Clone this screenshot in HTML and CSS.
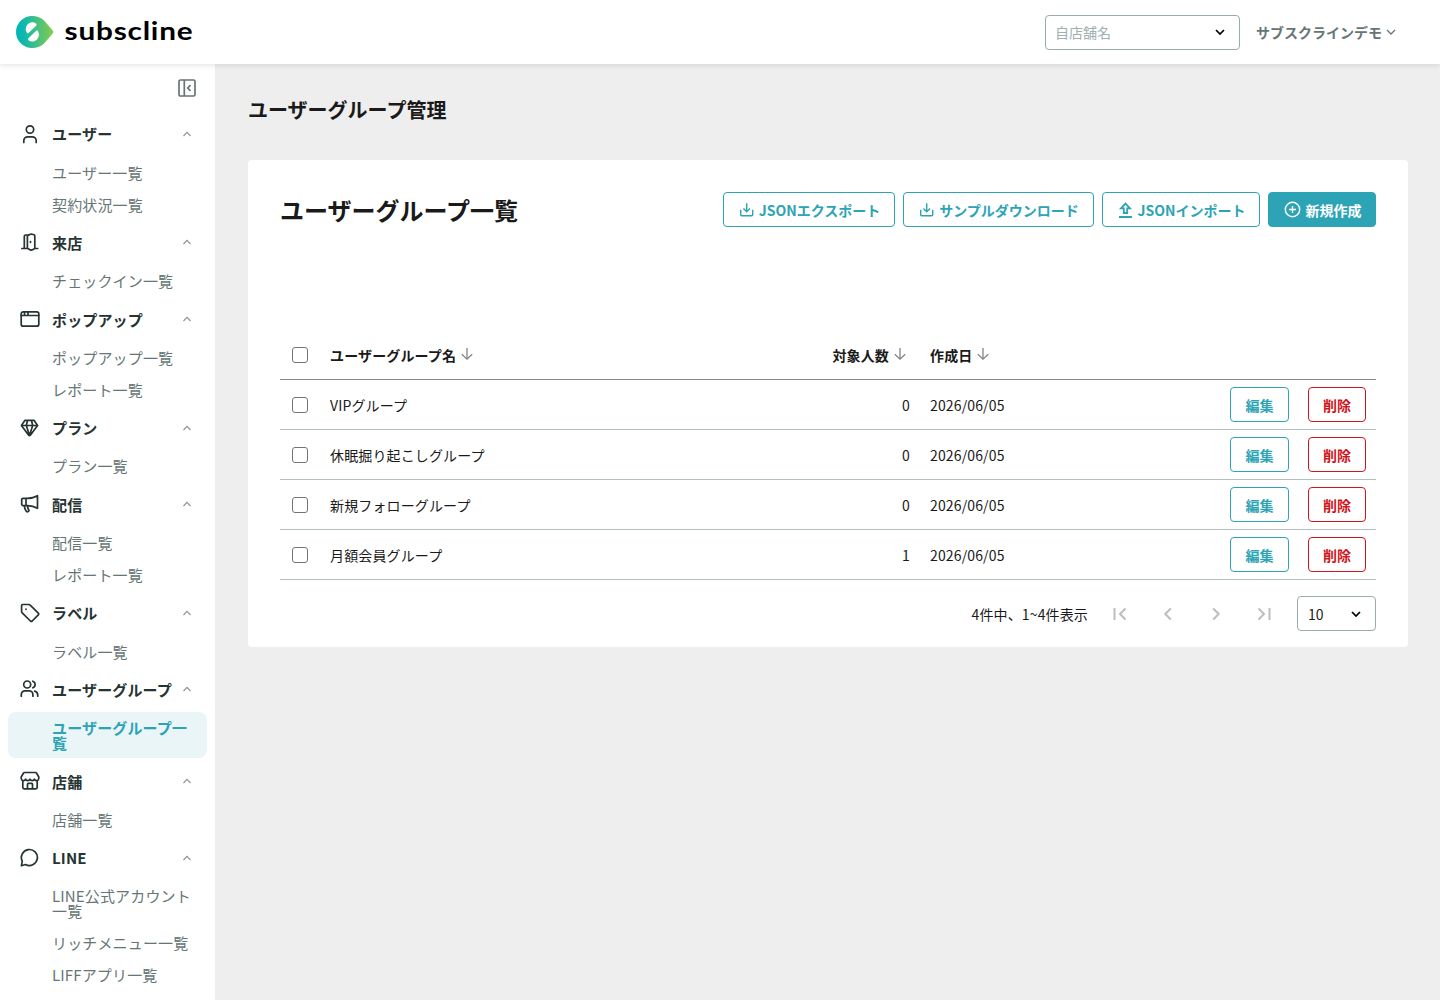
FILE: index.html
```html
<!DOCTYPE html>
<html lang="ja">
  <head>
    <meta charset="UTF-8" />
    <meta name="viewport" content="width=device-width, initial-scale=1.0" />
    <title>ユーザーグループ管理 | subscline</title>
    <link rel="stylesheet" href="styles.css">
  </head>
  <body>
    <!-- Shared icons -->
    <svg class="icon-defs" width="0" height="0">
      <symbol id="chevron-up" viewBox="0 0 10 10">
        <path d="M1.500 7 5 3.300 8.500 7" />
      </symbol>
      <symbol id="chevron-down" viewBox="0 0 12 12">
        <path d="M2 4l4 4 4-4" />
      </symbol>
      <symbol id="arrow-down" viewBox="0 0 14 14">
        <path d="M7 1v11M1.800 7.200 7 12.200l5.200-5" />
      </symbol>
      <symbol id="download" viewBox="0 0 18 18">
        <path d="M2.700 8.700v5.100q0 .9.900.9h10.200q.9 0 .9-.9V8.700M8.700 2.200v8.300M5.400 7.500 8.700 10.800 12 7.500" />
      </symbol>
    </svg>

    <header class="header">
      <a class="logo" href="#">
        <svg width="180" height="40" viewBox="0 0 180 40">
          <defs>
            <linearGradient id="logoGradient" x1="0" y1="0" x2="1" y2="0">
              <stop offset="0" stop-color="#00b5b8" />
              <stop offset="0.2" stop-color="#0eb8ae" />
              <stop offset="1" stop-color="#86cb4b" />
            </linearGradient>
          </defs>
          <path fill="url(#logoGradient)" d="M16 4c5 0 9.300 1.800 12.500 5l8.200 9.600q1.200 1.400 0 2.800L28.500 31c-3.200 3.200-7.500 5-12.500 5a16 16 0 0 1 0-32z" />
          <path fill="#fff" d="M20 11.600q1.200 1 .2 2.100L12.500 21q-1 .8-1.700-.2c-1.700-2.500-1.300-5.800.7-8.200 2.300-2.600 5.800-3.200 8.500-1zM12.500 28.300q-1.100-1-.1-2.100l7.800-7.500q1-.8 1.700.3c1.500 2.400 1.500 5.300-.3 7.700-2.200 3-6.200 3.700-9.100 1.600z" />
          <text class="logo-text" x="48.500" y="27.800" textLength="129" lengthAdjust="spacingAndGlyphs">subscline</text>
        </svg>
      </a>
      <div class="header-right">
        <div class="select shop-select">
          <span class="placeholder">自店舗名</span>
          <svg class="select-arrow"><use href="#chevron-down" /></svg>
        </div>
        <div class="account">
          サブスクラインデモ
          <svg class="account-arrow"><use href="#chevron-down" /></svg>
        </div>
      </div>
    </header>

    <div class="layout">
      <nav class="sidebar">
        <div class="sidebar-toggle">
          <svg width="20" height="20" viewBox="0 0 20 20">
            <rect x="2" y="2" width="16" height="16" rx="1.500" />
            <path d="M7.300 2v16M13.500 7.200 10.800 10l2.700 2.800" />
          </svg>
        </div>

        <div class="nav-group">
          <div class="nav-title">
            <svg class="nav-icon" viewBox="0 0 20 20"><circle cx="10" cy="5.500" r="3.700" /><path d="M3.800 18.500v-1.700a4 4 0 0 1 4-4h4.400a4 4 0 0 1 4 4v1.700" /></svg>
            <span>ユーザー</span>
            <svg class="nav-arrow"><use href="#chevron-up" /></svg>
          </div>
          <a class="nav-item" href="#">ユーザー一覧</a>
          <a class="nav-item" href="#">契約状況一覧</a>
        </div>

        <div class="nav-group">
          <div class="nav-title">
            <svg class="nav-icon" viewBox="0 0 20 20"><path d="M1.800 16.500h2.500V4.300q0-1.300 1.300-1.300h1.800M7.400 16.200V4.300q0-.9.900-1.200l2.200-.9q.8-.2 1.600 0l2 .5q.7.300.7 1.200v12.600M7.400 16.300l3 1.600q.8.300 1.600 0l2.800-1.400h2.900M7.400 16.500h-3M10.500 9.500v.8" /></svg>
            <span>来店</span>
            <svg class="nav-arrow"><use href="#chevron-up" /></svg>
          </div>
          <a class="nav-item" href="#">チェックイン一覧</a>
        </div>

        <div class="nav-group">
          <div class="nav-title">
            <svg class="nav-icon" viewBox="0 0 20 20"><rect x="1.200" y="2.800" width="17.600" height="14.400" rx="2" /><path d="M1.200 6.500h17.600M4.500 3v3.500M8 3v3.500" /></svg>
            <span>ポップアップ</span>
            <svg class="nav-arrow"><use href="#chevron-up" /></svg>
          </div>
          <a class="nav-item" href="#">ポップアップ一覧</a>
          <a class="nav-item" href="#">レポート一覧</a>
        </div>

        <div class="nav-group">
          <div class="nav-title">
            <svg class="nav-icon" viewBox="0 0 20 20"><path d="M5 2.300h9L17.600 7.500 10.300 17.300q-.8.900-1.600 0L1.400 7.500zM1.400 7.500h16.200M7.500 2.500 6.300 7.500 9.500 17.500 12.700 7.500 11.500 2.500" /></svg>
            <span>プラン</span>
            <svg class="nav-arrow"><use href="#chevron-up" /></svg>
          </div>
          <a class="nav-item" href="#">プラン一覧</a>
        </div>

        <div class="nav-group">
          <div class="nav-title">
            <svg class="nav-icon" viewBox="0 0 20 20"><path d="M3 4.300h4.500q5.500 0 10-2.600v12.600q-4.500-2.700-10-2.700H3a1.300 1.300 0 0 1-1.300-1.300V5.600A1.300 1.300 0 0 1 3 4.300zM6 4.300v7.300M4.300 11.700c.2 2.200.8 4 2 5.400q.8 1 1.900.5 1.100-.7.500-1.800-1.200-1.800-1.200-4" /></svg>
            <span>配信</span>
            <svg class="nav-arrow"><use href="#chevron-up" /></svg>
          </div>
          <a class="nav-item" href="#">配信一覧</a>
          <a class="nav-item" href="#">レポート一覧</a>
        </div>

        <div class="nav-group">
          <div class="nav-title">
            <svg class="nav-icon" viewBox="0 0 20 20"><path d="M2.700 1.500h6.100q.8 0 1.400.6l8.100 8q.8.900 0 1.800l-6.100 6.100q-.9.800-1.800 0l-8.200-8.100q-.6-.6-.6-1.400V2.700q0-1.200 1.100-1.200zM6 6.200v.1" /></svg>
            <span>ラベル</span>
            <svg class="nav-arrow"><use href="#chevron-up" /></svg>
          </div>
          <a class="nav-item" href="#">ラベル一覧</a>
        </div>

        <div class="nav-group">
          <div class="nav-title">
            <svg class="nav-icon" viewBox="0 0 20 20"><circle cx="7.200" cy="5.500" r="3.500" /><path d="M1.300 17.200v-1.700a3.700 3.700 0 0 1 3.700-3.700h4.200a3.700 3.700 0 0 1 3.700 3.700v1.700M12.800 2.200a3.500 3.500 0 0 1 0 6.600M14.700 12.100q3 .8 3 3.700v1.400" /></svg>
            <span>ユーザーグループ</span>
            <svg class="nav-arrow"><use href="#chevron-up" /></svg>
          </div>
          <a class="nav-item active" href="#">ユーザーグループ一覧</a>
        </div>

        <div class="nav-group">
          <div class="nav-title">
            <svg class="nav-icon" viewBox="0 0 20 20"><path d="M4.600 1.500h10.800q.8 0 1.200.8L18.800 6v1.500a2.300 2.300 0 0 1-4.400.7 2.400 2.400 0 0 1-4.400 0 2.400 2.400 0 0 1-4.400 0 2.300 2.300 0 0 1-4.400-.7V6l2.200-3.700q.4-.8 1.200-.8zM2.800 9.500v7q0 1.300 1.300 1.300h11.800q1.300 0 1.300-1.300v-7M7.500 17.500v-4.200q0-.9.900-.9h3.200q.9 0 .9.900v4.200" /></svg>
            <span>店舗</span>
            <svg class="nav-arrow"><use href="#chevron-up" /></svg>
          </div>
          <a class="nav-item" href="#">店舗一覧</a>
        </div>

        <div class="nav-group">
          <div class="nav-title">
            <svg class="nav-icon" viewBox="0 0 20 20"><path d="M1.400 17.700 2.300 13.200a8 8 0 1 1 3.200 3.300z" /></svg>
            <span>LINE</span>
            <svg class="nav-arrow"><use href="#chevron-up" /></svg>
          </div>
          <a class="nav-item" href="#">LINE公式アカウント一覧</a>
          <a class="nav-item" href="#">リッチメニュー一覧</a>
          <a class="nav-item" href="#">LIFFアプリ一覧</a>
        </div>
      </nav>

      <main class="main">
        <h1 class="page-title">ユーザーグループ管理</h1>

        <section class="card">
          <div class="card-header">
            <h2 class="card-title">ユーザーグループ一覧</h2>
            <div class="toolbar">
              <button class="btn btn-export"><svg class="btn-icon"><use href="#download" /></svg>JSONエクスポート</button>
              <button class="btn btn-sample"><svg class="btn-icon"><use href="#download" /></svg>サンプルダウンロード</button>
              <button class="btn btn-import">
                <svg class="btn-icon btn-icon-bold" viewBox="0 0 18 18"><path d="M2 16h13M6.800 12V7.300H4L8.500 2.600 13 7.300h-2.800V12z" /></svg>JSONインポート
              </button>
              <button class="btn btn-new">
                <svg class="btn-icon" viewBox="0 0 18 18"><circle cx="9.500" cy="8.500" r="7.200" /><path d="M9.500 5v7M6 8.500h7" /></svg>新規作成
              </button>
            </div>
          </div>

          <table class="group-table">
            <thead>
              <tr>
                <th class="col-check"><input type="checkbox" /></th>
                <th class="col-name">ユーザーグループ名<svg class="sort-icon"><use href="#arrow-down" /></svg></th>
                <th class="col-count">対象人数<svg class="sort-icon"><use href="#arrow-down" /></svg></th>
                <th class="col-date">作成日<svg class="sort-icon"><use href="#arrow-down" /></svg></th>
                <th class="col-actions"></th>
              </tr>
            </thead>
            <tbody>
              <tr>
                <td class="col-check"><input type="checkbox" /></td>
                <td>VIPグループ</td>
                <td class="col-count">0</td>
                <td>2026/06/05</td>
                <td><div class="actions"><button class="btn btn-edit">編集</button><button class="btn btn-delete">削除</button></div></td>
              </tr>
              <tr>
                <td class="col-check"><input type="checkbox" /></td>
                <td>休眠掘り起こしグループ</td>
                <td class="col-count">0</td>
                <td>2026/06/05</td>
                <td><div class="actions"><button class="btn btn-edit">編集</button><button class="btn btn-delete">削除</button></div></td>
              </tr>
              <tr>
                <td class="col-check"><input type="checkbox" /></td>
                <td>新規フォローグループ</td>
                <td class="col-count">0</td>
                <td>2026/06/05</td>
                <td><div class="actions"><button class="btn btn-edit">編集</button><button class="btn btn-delete">削除</button></div></td>
              </tr>
              <tr>
                <td class="col-check"><input type="checkbox" /></td>
                <td>月額会員グループ</td>
                <td class="col-count">1</td>
                <td>2026/06/05</td>
                <td><div class="actions"><button class="btn btn-edit">編集</button><button class="btn btn-delete">削除</button></div></td>
              </tr>
            </tbody>
          </table>

          <div class="pagination">
            <span class="page-info">4件中、1~4件表示</span>
            <div class="page-buttons">
              <svg class="page-icon" viewBox="0 0 24 24"><path d="M6.500 6v12M17.500 6.500 12 12l5.500 5.500" /></svg>
              <svg class="page-icon" viewBox="0 0 24 24"><path d="M14.800 6.500 9.300 12l5.500 5.500" /></svg>
              <svg class="page-icon" viewBox="0 0 24 24"><path d="M9.200 6.500 14.700 12l-5.500 5.500" /></svg>
              <svg class="page-icon" viewBox="0 0 24 24"><path d="M6.500 6.500 12 12l-5.500 5.500M17.500 6v12" /></svg>
            </div>
            <div class="select size-select">
              <span>10</span>
              <svg class="select-arrow"><use href="#chevron-down" /></svg>
            </div>
          </div>
        </section>
      </main>
    </div>
  </body>
</html>
```

FILE: styles.css
```css
* {
  box-sizing: border-box;
}

body {
  display: flex;
  flex-direction: column;
  height: 100vh;
  margin: 0;
  overflow: hidden;
  background: #eeeeee;
  color: #1a1a1a;
  font-family: "Noto Sans CJK JP", sans-serif;
  font-size: 14px;
}

svg {
  flex: none;
  fill: none;
  stroke: currentColor;
}

.icon-defs {
  display: none;
}

/* Header */
.header {
  display: flex;
  flex: none;
  align-items: center;
  justify-content: space-between;
  height: 64px;
  padding: 0 43px 0 16px;
  background: white;
  box-shadow: 0 1px 6px rgba(0, 0, 0, 0.12);
  z-index: 1;
}

.logo svg {
  display: block;
  stroke: none;
}

.logo-text {
  fill: #000;
  font-family: Lato, sans-serif;
  font-size: 25.5px;
  font-weight: bold;
  letter-spacing: 0.7px;
}

.header-right {
  display: flex;
  align-items: center;
  gap: 16px;
}

.select {
  display: flex;
  align-items: center;
  justify-content: space-between;
  height: 35px;
  padding: 0 13px 0 10px;
  border: 1px solid #9aabab;
  border-radius: 4px;
  background: white;
}

.shop-select {
  width: 195px;
  padding-left: 9px;
}

.placeholder {
  color: #a0b0b0;
}

.select-arrow {
  width: 12px;
  height: 12px;
  color: #000;
  stroke-width: 1.7;
}

.account {
  display: flex;
  align-items: center;
  gap: 3px;
  color: #667676;
  font-weight: bold;
}

.account-arrow {
  width: 12px;
  height: 12px;
  stroke-width: 1.3;
}

/* Sidebar */
.layout {
  display: flex;
  flex: 1;
  min-height: 0;
}

.sidebar {
  flex: none;
  width: 215px;
  padding: 14px 8px 0;
  background: white;
  overflow: hidden;
}

.sidebar-toggle {
  display: flex;
  justify-content: flex-end;
  height: 33.6px;
  padding-right: 10px;
  color: #667676;
}

.sidebar-toggle svg {
  stroke-width: 1.7;
}

.nav-group {
  margin-bottom: 0.6px;
}

.nav-title {
  display: flex;
  align-items: center;
  height: 44.6px;
  margin-bottom: -0.6px;
  padding: 0 15px 0 12px;
  color: #263333;
  font-size: 15px;
  font-weight: bold;
  letter-spacing: 0.15px;
}

.nav-title span {
  flex: 1;
  white-space: nowrap;
}

.nav-icon {
  width: 20px;
  height: 20px;
  margin-right: 12px;
  stroke-width: 1.7;
  stroke-linecap: round;
  stroke-linejoin: round;
}

.nav-arrow {
  width: 10px;
  height: 10px;
  color: #8a9696;
  stroke-width: 1.2;
}

.nav-item {
  display: block;
  margin-top: 1px;
  padding: 8px 16px 8px 44px;
  border-radius: 8px;
  color: #667676;
  font-size: 15px;
  line-height: 15px;
  letter-spacing: 0.15px;
  text-decoration: none;
}

.nav-item.active {
  background: #eaf5f7;
  color: #2ca4b5;
  font-weight: bold;
}

/* Main */
.main {
  flex: 1;
  padding: 30px 32px 0 33px;
}

.page-title {
  margin: 0 0 34px;
  font-size: 20px;
  line-height: 32px;
}

.card {
  height: 487px;
  padding: 32px;
  border-radius: 4px;
  background: white;
}

.card-header {
  display: flex;
  align-items: center;
  justify-content: space-between;
  height: 35px;
  margin-bottom: 103px;
}

.card-title {
  margin: 0;
  font-size: 24px;
}

.toolbar {
  display: flex;
  gap: 8px;
}

/* Buttons */
.btn {
  display: flex;
  align-items: center;
  justify-content: center;
  height: 35px;
  padding: 0;
  border: 1px solid #2ca4b5;
  border-radius: 4px;
  background: white;
  color: #2ca4b5;
  font-family: inherit;
  font-size: 14px;
  font-weight: bold;
  white-space: nowrap;
}

.btn-icon {
  width: 18px;
  height: 18px;
  margin-right: 3px;
  stroke-width: 1.4;
}

.btn-icon-bold {
  stroke-width: 1.8;
}

.btn-export {
  width: 172px;
}

.btn-sample {
  width: 191px;
}

.btn-import {
  width: 158px;
}

.btn-new {
  width: 108px;
  background: #2ca4b5;
  color: white;
}

.btn-new .btn-icon {
  margin-right: 5px;
}

.btn-edit {
  width: 59px;
}

.btn-delete {
  width: 58px;
  border-color: #d0151c;
  color: #d0151c;
}

/* Table */
.group-table {
  width: 100%;
  table-layout: fixed;
  border-collapse: separate;
  border-spacing: 0;
  letter-spacing: 0.14px;
}

.group-table th,
.group-table td {
  height: 50px;
  padding: 0 10px;
  border-bottom: 1px solid #b3bfbf;
  text-align: left;
}

.group-table th {
  border-bottom-color: #7f8a8a;
}

.group-table .col-check {
  width: 40px;
  padding: 0;
  text-align: center;
}

.group-table .col-count {
  width: 120px;
  text-align: right;
}

.group-table th.col-count {
  padding-right: 13px;
}

.col-date {
  width: 200px;
}

.col-actions {
  width: 256px;
}

input[type="checkbox"] {
  display: block;
  width: 16px;
  height: 16px;
  margin: 0 auto;
  appearance: none;
  border: 1px solid #767676;
  border-radius: 3px;
  background: white;
}

.sort-icon {
  width: 14px;
  height: 14px;
  margin-left: 4px;
  vertical-align: 0;
  color: #858585;
  stroke-width: 1.3;
}

.actions {
  display: flex;
  justify-content: flex-end;
  gap: 19px;
}

/* Pagination */
.pagination {
  display: flex;
  align-items: center;
  justify-content: flex-end;
  height: 35px;
  margin-top: 16px;
}

.page-info {
  letter-spacing: 0.14px;
}

.page-buttons {
  display: flex;
  gap: 24px;
  margin: 0 21px 0 20px;
  color: #bdbdbd;
}

.page-icon {
  width: 24px;
  height: 24px;
  stroke-width: 2;
}

.size-select {
  width: 79px;
}
```
